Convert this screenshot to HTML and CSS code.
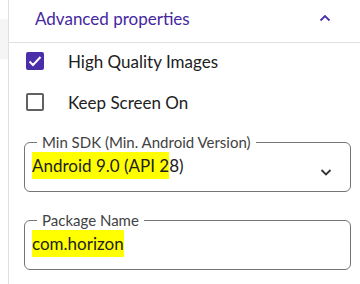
FILE: index.html
```html
<!DOCTYPE html>
<html lang="en">
<head>
    <meta charset="UTF-8">
    <meta name="viewport" content="width=device-width, initial-scale=1.0">
    <title>Advanced properties</title>
    <link rel="stylesheet" href="styles.css">
</head>
<body>
    <div class="layout">
        <div class="rail">
            <div class="rail-item"></div>
        </div>
        <div class="panel">
            <div class="panel-header">
                <span class="panel-title">Advanced properties</span>
                <svg class="chevron-up" width="14" height="14" viewBox="0 0 14 14">
                    <path d="M2.5 9.5 L7 5 L11.5 9.5" fill="none" stroke="#4a2fb0" stroke-width="1.8"/>
                </svg>
            </div>
            <div class="panel-body">
                <label class="check-row">
                    <span class="checkbox checked">
                        <svg width="18" height="18" viewBox="0 0 18 18">
                            <path d="M3.5 9.5 L7 13 L14.5 5" fill="none" stroke="#fff" stroke-width="2"/>
                        </svg>
                    </span>
                    <span class="check-label">High Quality Images</span>
                </label>
                <label class="check-row">
                    <span class="checkbox"></span>
                    <span class="check-label">Keep Screen On</span>
                </label>

                <fieldset class="field field-select">
                    <legend>Min SDK (Min. Android Version)</legend>
                    <div class="field-value">
                        <span class="mark">Android 9.0 (API 2</span>8)
                    </div>
                    <svg class="chevron-down" width="14" height="14" viewBox="0 0 14 14">
                        <path d="M2.5 5 L7 9.5 L11.5 5" fill="none" stroke="#333" stroke-width="1.8"/>
                    </svg>
                </fieldset>

                <fieldset class="field">
                    <legend>Package Name</legend>
                    <div class="field-value">
                        <span class="mark">com.horizon</span>
                    </div>
                </fieldset>
            </div>
        </div>
    </div>
</body>
</html>
```

FILE: styles.css
```css
body {
    margin: 0;
    font-family: 'Lato', 'Noto Sans', sans-serif;
    background: #fff;
    color: #212121;
}

.layout {
    display: flex;
    height: 284px;
}

.rail {
    width: 8px;
}

.rail-item {
    margin-top: 19px;
    height: 40px;
    background: #f5f5f5;
}

.panel {
    flex-grow: 1;
    border-left: 1px solid #e0e0e0;
}

.panel-header {
    display: flex;
    align-items: center;
    height: 42px;
    padding: 0 28px 0 26px;
    border-bottom: 1px solid #e0e0e0;
}

.panel-title {
    flex-grow: 1;
    font-size: 17px;
    color: #4527a0;
    margin-top: -5px;
}

.chevron-up {
    margin-top: -6px;
}

.panel-body {
    padding: 8px 9px 0 15px;
}

.check-row {
    display: flex;
    align-items: center;
    height: 20px;
    margin-bottom: 21px;
}

.checkbox {
    box-sizing: border-box;
    width: 18px;
    height: 18px;
    margin-left: 2px;
    border: 2px solid #616161;
    border-radius: 2px;
    display: flex;
    align-items: center;
    justify-content: center;
}

.checkbox.checked {
    background: #4a2ea8;
    border-color: #4a2ea8;
}

.checkbox svg {
    flex-shrink: 0;
}

.check-label {
    margin-left: 24px;
    font-size: 17px;
    color: #212121;
}

.field {
    position: relative;
    margin: 0;
    height: 57px;
    padding: 0 7px;
    border: 1px solid #757575;
    border-radius: 6px;
    min-width: 0;
}

.field-select {
    margin-top: 14px;
    margin-bottom: 19px;
}

.field legend {
    padding: 0 5px;
    margin-left: 5px;
    font-size: 15px;
    color: #424242;
}

.field-value {
    font-size: 17px;
    color: #212121;
    margin-top: 4px;
}

.mark {
    background: #ffff00;
    padding: 3px 0;
}

.chevron-down {
    position: absolute;
    right: 17px;
    top: 14px;
}
```
